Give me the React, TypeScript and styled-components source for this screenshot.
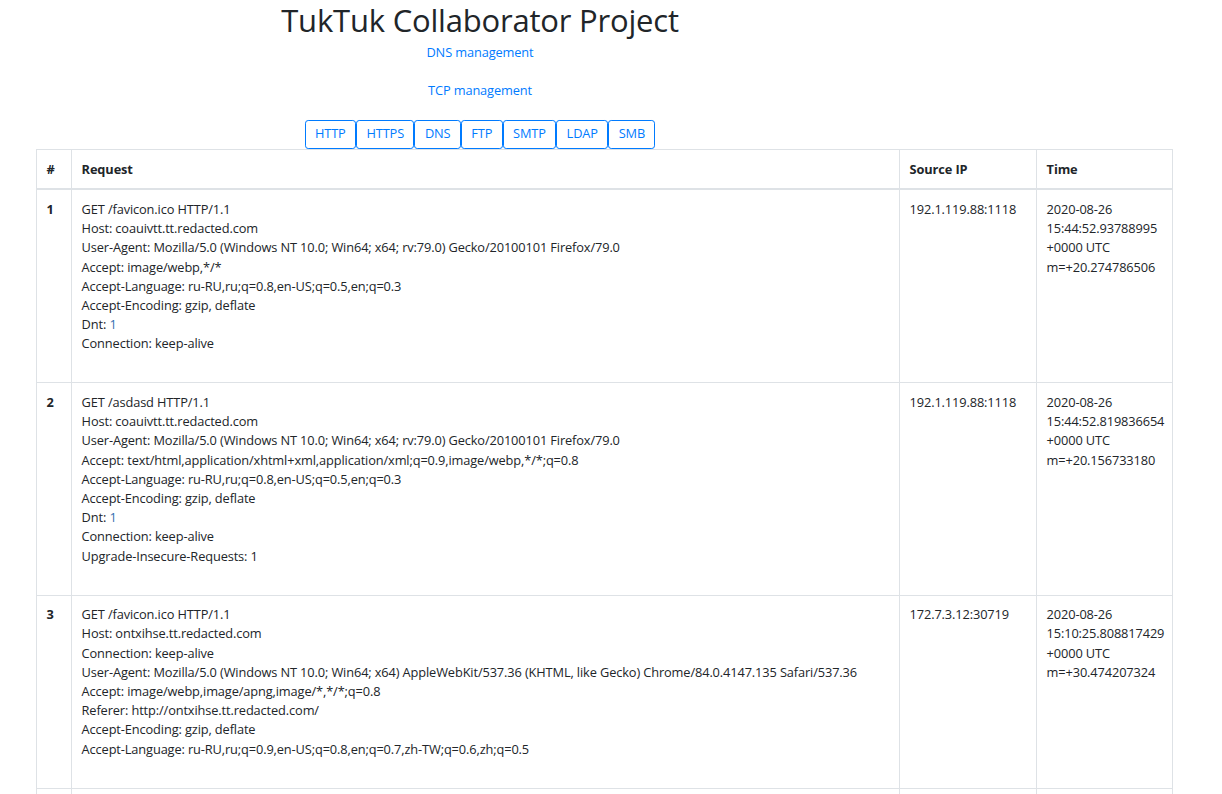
import styled, { createGlobalStyle } from "styled-components";

const GlobalStyle = createGlobalStyle`
    body {
        margin: 0;
        font-family: "Open Sans", "Liberation Sans", sans-serif;
        font-size: 12.8px;
        line-height: 19.2px;
        letter-spacing: -0.12px;
        color: #212529;
        background: #fff;
    }
`;

const Page = styled.div`
    padding-bottom: 40px;
`;

const Header = styled.header`
    width: 960px;
    text-align: center;
`;

const Title = styled.h1`
    margin: 0;
    padding-top: 1px;
    font-size: 31px;
    line-height: 38px;
    font-weight: 400;
    letter-spacing: -0.2px;
    color: #212529;
`;

const LinkLine = styled.div<{ $gap: number }>`
    margin-top: ${(props) => props.$gap}px;
`;

const NavLink = styled.a`
    color: #007bff;
    text-decoration: none;
`;

const Protocols = styled.div`
    display: flex;
    justify-content: center;
    margin-top: 20px;
`;

const ProtoButton = styled.button`
    font-family: inherit;
    font-size: 12.8px;
    line-height: 19.2px;
    letter-spacing: -0.12px;
    padding: 3px 9.4px 4px;
    color: #007bff;
    background: #fff;
    border: 1px solid #007bff;
    border-radius: 3.2px;
    cursor: pointer;
`;

const Table = styled.table`
    margin-left: 36px;
    width: 1137px;
    border-collapse: collapse;
    table-layout: fixed;
`;

const Th = styled.th<{ $w?: number }>`
    box-sizing: border-box;
    width: ${(props) => (props.$w ? `${props.$w}px` : "auto")};
    text-align: left;
    font-weight: 700;
    padding: 10px 9.6px 9.6px;
    border: 1px solid #dee2e6;
    border-bottom-width: 2px;
    vertical-align: top;
`;

const Td = styled.td`
    padding: 9.6px 9.6px 28.8px;
    border: 1px solid #dee2e6;
    vertical-align: top;
`;

const NumCell = styled(Td)`
    font-weight: 700;
`;

const Line = styled.div`
    white-space: nowrap;
`;

const Dnt = styled.span`
    color: #3570b0;
`;

type Req = { lines: string[]; ip: string; time: string[] };

const ua79 = "User-Agent: Mozilla/5.0 (Windows NT 10.0; Win64; x64; rv:79.0) Gecko/20100101 Firefox/79.0";

const requests: Req[] = [
    {
        lines: [
            "GET /favicon.ico HTTP/1.1",
            "Host: coauivtt.tt.redacted.com",
            ua79,
            "Accept: image/webp,*/*",
            "Accept-Language: ru-RU,ru;q=0.8,en-US;q=0.5,en;q=0.3",
            "Accept-Encoding: gzip, deflate",
            "Dnt: 1",
            "Connection: keep-alive",
        ],
        ip: "192.1.119.88:1118",
        time: ["2020-08-26", "15:44:52.93788995", "+0000 UTC", "m=+20.274786506"],
    },
    {
        lines: [
            "GET /asdasd HTTP/1.1",
            "Host: coauivtt.tt.redacted.com",
            ua79,
            "Accept: text/html,application/xhtml+xml,application/xml;q=0.9,image/webp,*/*;q=0.8",
            "Accept-Language: ru-RU,ru;q=0.8,en-US;q=0.5,en;q=0.3",
            "Accept-Encoding: gzip, deflate",
            "Dnt: 1",
            "Connection: keep-alive",
            "Upgrade-Insecure-Requests: 1",
        ],
        ip: "192.1.119.88:1118",
        time: ["2020-08-26", "15:44:52.819836654", "+0000 UTC", "m=+20.156733180"],
    },
    {
        lines: [
            "GET /favicon.ico HTTP/1.1",
            "Host: ontxihse.tt.redacted.com",
            "Connection: keep-alive",
            "User-Agent: Mozilla/5.0 (Windows NT 10.0; Win64; x64) AppleWebKit/537.36 (KHTML, like Gecko) Chrome/84.0.4147.135 Safari/537.36",
            "Accept: image/webp,image/apng,image/*,*/*;q=0.8",
            "Referer: http://ontxihse.tt.redacted.com/",
            "Accept-Encoding: gzip, deflate",
            "Accept-Language: ru-RU,ru;q=0.9,en-US;q=0.8,en;q=0.7,zh-TW;q=0.6,zh;q=0.5",
        ],
        ip: "172.7.3.12:30719",
        time: ["2020-08-26", "15:10:25.808817429", "+0000 UTC", "m=+30.474207324"],
    },
    {
        lines: [
            "GET / HTTP/1.1",
            "Host: ontxihse.tt.redacted.com",
            "Connection: keep-alive",
        ],
        ip: "172.7.3.12:30719",
        time: ["2020-08-26", "15:10:25.601287112", "+0000 UTC", "m=+30.266676907"],
    },
];

const protocols = ["HTTP", "HTTPS", "DNS", "FTP", "SMTP", "LDAP", "SMB"];

function HeaderLine({ text }: { text: string }) {
    if (text === "Dnt: 1") {
        return (
            <Line>
                Dnt: <Dnt>1</Dnt>
            </Line>
        );
    }
    return <Line>{text}</Line>;
}

export default function App(): JSX.Element {
    return (
        <Page>
            <GlobalStyle />
            <Header>
                <Title>TukTuk Collaborator Project</Title>
                <LinkLine $gap={4}>
                    <NavLink href="#">DNS management</NavLink>
                </LinkLine>
                <LinkLine $gap={19}>
                    <NavLink href="#">TCP management</NavLink>
                </LinkLine>
                <Protocols>
                    {protocols.map((p) => (
                        <ProtoButton key={p}>{p}</ProtoButton>
                    ))}
                </Protocols>
            </Header>
            <Table>
                <thead>
                    <tr>
                        <Th $w={35}>#</Th>
                        <Th>Request</Th>
                        <Th $w={137}>Source IP</Th>
                        <Th $w={136}>Time</Th>
                    </tr>
                </thead>
                <tbody>
                    {requests.map((r, i) => (
                        <tr key={i}>
                            <NumCell>{i + 1}</NumCell>
                            <Td>
                                {r.lines.map((l, j) => (
                                    <HeaderLine key={j} text={l} />
                                ))}
                            </Td>
                            <Td>{r.ip}</Td>
                            <Td>
                                {r.time.map((t, j) => (
                                    <Line key={j}>{t}</Line>
                                ))}
                            </Td>
                        </tr>
                    ))}
                </tbody>
            </Table>
        </Page>
    );
}
